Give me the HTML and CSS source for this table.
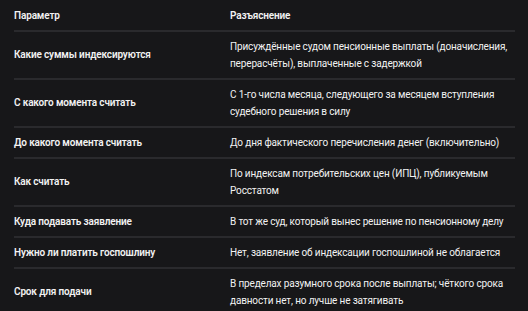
FILE: index.html
```html
<!DOCTYPE html>
<html lang="ru">
<head>
<meta charset="utf-8">
<link rel="stylesheet" href="styles.css">
</head>
<body>
<table class="info">
  <thead>
    <tr><th class="c1">Параметр</th><th class="c2">Разъяснение</th></tr>
  </thead>
  <tbody>
    <tr><td class="c1">Какие суммы индексируются</td><td class="c2">Присуждённые судом пенсионные выплаты (доначисления, перерасчёты), выплаченные с задержкой</td></tr>
    <tr><td class="c1">С какого момента считать</td><td class="c2">С 1-го числа месяца, следующего за месяцем вступления судебного решения в силу</td></tr>
    <tr><td class="c1">До какого момента считать</td><td class="c2">До дня фактического перечисления денег (включительно)</td></tr>
    <tr><td class="c1">Как считать</td><td class="c2">По индексам потребительских цен (ИПЦ), публикуемым Росстатом</td></tr>
    <tr><td class="c1">Куда подавать заявление</td><td class="c2">В тот же суд, который вынес решение по пенсионному делу</td></tr>
    <tr><td class="c1">Нужно ли платить госпошлину</td><td class="c2">Нет, заявление об индексации госпошлиной не облагается</td></tr>
    <tr><td class="c1">Срок для подачи</td><td class="c2">В пределах разумного срока после выплаты; чёткого срока давности нет, но лучше не затягивать</td></tr>
  </tbody>
</table>
</body>
</html>
```
FILE: styles.css
```css
html, body {
  margin: 0;
  background: #171719;
}
body {
  padding: 0 13px 0 14px;
  font-family: Roboto, "Noto Sans", sans-serif;
  font-size: 10px;
  letter-spacing: -0.15px;
  line-height: 17px;
  color: #f2f2f2;
}
.info {
  width: 501px;
  border-collapse: collapse;
  table-layout: fixed;
}
.info th, .info td {
  text-align: left;
  vertical-align: middle;
  padding: 6px 0;
  border-bottom: 2px solid #2a2a2d;
}
.info th {
  font-weight: 600;
  padding-top: 6.5px;
}
.info td.c1 {
  font-weight: 600;
}
.info .c1 {
  width: 216px;
}
.info .c2 {
  font-weight: 400;
}
.info th.c2 {
  font-weight: 600;
}
.info tbody tr:last-child td {
  border-bottom: none;
}
```
